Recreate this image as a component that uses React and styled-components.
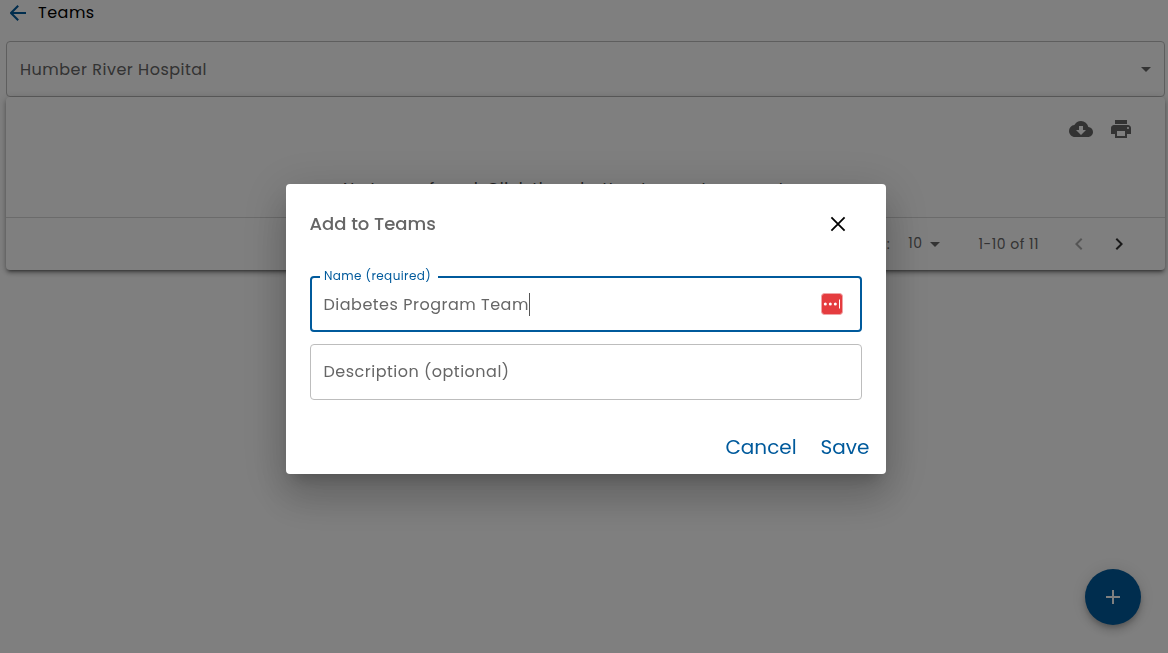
import React from "react";
import styled, { createGlobalStyle } from "styled-components";
import { MdCloudDownload, MdPrint, MdArrowDropDown, MdChevronLeft, MdChevronRight } from "react-icons/md";

const BLUE = "#005a9c";

const Global = createGlobalStyle`
  * { box-sizing: border-box; }
  body {
    margin: 0;
    background: #fff;
    overflow: hidden;
    font-family: Poppins, Inter, "Liberation Sans", sans-serif;
    font-size: 16px;
    color: #666;
  }
  button { font: inherit; border: 0; background: none; padding: 0; }
  svg { display: block; }
`;

const Text = styled.span`
  white-space: nowrap;
  font-size: ${(p) => p.$size || 16}px;
  letter-spacing: ${(p) => p.$track ?? 0.5}px;
  font-weight: ${(p) => p.$weight || 400};
  color: ${(p) => p.$color || "inherit"};
`;

const Page = styled.main`
  height: 653px;
  padding: 0 3px 0 6px;
`;

const Header = styled.header`
  display: flex;
  align-items: center;
  gap: 12px;
  height: 25px;
  padding-left: 4px;
  margin-bottom: 16px;
`;

const Select = styled.div`
  display: flex;
  align-items: center;
  justify-content: space-between;
  height: 56px;
  padding: 0 6px 0 13px;
  border: 1px solid #bdbdbd;
  border-radius: 4px;
`;

const Paper = styled.section`
  height: 173px;
  border-radius: 4px;
  background: #fff;
  box-shadow: 0 3px 3px -2px rgba(0, 0, 0, 0.4), 0 3px 4px rgba(0, 0, 0, 0.24), 0 1px 8px rgba(0, 0, 0, 0.2);
`;

const Toolbar = styled.div`
  display: flex;
  justify-content: flex-end;
  gap: 16px;
  height: 64px;
  padding: 20px 32px 0 0;
  color: #666;
`;

const Empty = styled.div`
  height: 57px;
  padding: 15px 0 0 337px;
  border-bottom: 1px solid #d6d6d6;
  color: #444;
`;

const Pagination = styled.footer`
  display: flex;
  align-items: center;
  justify-content: flex-end;
  height: 52px;
  padding-right: 34px;
`;

const PageSize = styled.div`
  display: flex;
  align-items: center;
  margin: 0 32px 0 18px;
`;

const PageCount = styled.div`
  padding-bottom: 3px;
`;

const Chevrons = styled.div`
  display: flex;
  gap: 16px;
  margin-left: 28px;
`;

const Fab = styled.button`
  position: fixed;
  right: 27px;
  bottom: 28px;
  display: grid;
  place-items: center;
  width: 56px;
  height: 56px;
  border-radius: 50%;
  background: ${BLUE};
  box-shadow: 0 3px 5px -1px rgba(0, 0, 0, 0.2), 0 6px 10px rgba(0, 0, 0, 0.14), 0 1px 18px rgba(0, 0, 0, 0.12);
`;

const Backdrop = styled.div`
  position: fixed;
  inset: 0;
  padding: 184px 0 0 286px;
  background: rgba(0, 0, 0, 0.5);
`;

const Dialog = styled.section`
  width: 600px;
  height: 290px;
  padding: 0 24px;
  border-radius: 4px;
  background: #fff;
  box-shadow: 0 11px 15px -7px rgba(0, 0, 0, 0.2), 0 24px 38px 3px rgba(0, 0, 0, 0.14), 0 9px 46px 8px rgba(0, 0, 0, 0.12);
`;

const DialogHeader = styled.div`
  display: flex;
  align-items: center;
  justify-content: space-between;
  height: 80px;
  padding-right: 16px;
`;

const DialogTitle = styled.h2`
  margin: 0 0 0 -0.5px;
  font-size: 18px;
  font-weight: 500;
  line-height: 26px;
`;

const Field = styled.fieldset`
  min-width: 0;
  height: ${(p) => (p.$active ? 62 : 56)}px;
  margin: ${(p) => (p.$active ? "6px 0 12px" : "0")};
  padding: ${(p) => (p.$active ? "0 17px 0 11.5px" : "0 12.5px")};
  border: ${(p) => (p.$active ? `2px solid ${BLUE}` : "1px solid #bdbdbd")};
  border-radius: 4px;
`;

const Legend = styled.legend`
  width: 118px;
  height: 14px;
  margin-left: -3.5px;
  padding: 0 7px 0 4px;
  line-height: 10px;
`;

const FieldRow = styled.div`
  display: flex;
  align-items: center;
  justify-content: space-between;
  height: ${(p) => (p.$active ? 40 : 52)}px;
`;

const Value = styled.div`
  display: flex;
  align-items: center;
`;

const Caret = styled.span`
  width: 1px;
  height: 23px;
  background: #555;
`;

const Actions = styled.div`
  display: flex;
  justify-content: flex-end;
  align-items: center;
  gap: 24px;
  height: 59px;
  margin: 17px -7.5px 0 0;
`;

function PasswordBadge() {
  return (
    <svg width="22" height="22" viewBox="0 0 22 22">
      <rect x=".5" y=".5" width="21" height="21" rx="3" fill="#e53c3f" stroke="#f0a5a7" />
      <g fill="#fff">
        <circle cx="4.3" cy="11" r="1.5" />
        <circle cx="9.3" cy="11" r="1.5" />
        <circle cx="14.3" cy="11" r="1.5" />
        <rect x="18" y="6.5" width="1" height="9" />
      </g>
    </svg>
  );
}

export default function App() {
  return (
    <>
      <Global />
      <Page>
        <Header>
          <svg width="16" height="16" viewBox="0 0 16 16" fill="none" stroke={BLUE} strokeWidth="2">
            <path d="M16 8H1.5M8.2.7L1 8l7.2 7.3" />
          </svg>
          <Text $color="#000">Teams</Text>
        </Header>
        <Select>
          <Text>Humber River Hospital</Text>
          <MdArrowDropDown size={24} />
        </Select>
        <Paper>
          <Toolbar>
            <MdCloudDownload size={24} />
            <MdPrint size={24} />
          </Toolbar>
          <Empty>
            <Text>
              No teams found. Click the <Text $size={12} $track={2.6}>+</Text> button to create a new team.
            </Text>
          </Empty>
          <Pagination>
            <Text $size={14}>Rows per page:</Text>
            <PageSize>
              <PageCount><Text $size={14}>10</Text></PageCount>
              <MdArrowDropDown size={24} />
            </PageSize>
            <Text $size={14}>1-10 of 11</Text>
            <Chevrons>
              <MdChevronLeft size={24} color="#ababab" />
              <MdChevronRight size={24} color="#333" />
            </Chevrons>
          </Pagination>
        </Paper>
        <Fab aria-label="Add">
          <svg width="14" height="14" viewBox="0 0 14 14" stroke="#fff" strokeWidth="2">
            <path d="M7 0v14M0 7h14" />
          </svg>
        </Fab>
      </Page>
      <Backdrop>
        <Dialog role="dialog" aria-label="Add to Teams">
          <DialogHeader>
            <DialogTitle>Add to Teams</DialogTitle>
            <button aria-label="Close">
              <svg width="16" height="16" viewBox="0 0 16 16" stroke="#000" strokeWidth="1.8">
                <path d="M1.4 1.4l13.2 13.2M14.6 1.4L1.4 14.6" />
              </svg>
            </button>
          </DialogHeader>
          <Field $active>
            <Legend><Text $size={12} $color={BLUE} $track={0.4}>Name (required)</Text></Legend>
            <FieldRow $active>
              <Value><Text>Diabetes Program Team</Text><Caret /></Value>
              <PasswordBadge />
            </FieldRow>
          </Field>
          <Field>
            <FieldRow><Text>Description (optional)</Text></FieldRow>
          </Field>
          <Actions>
            <button><Text $size={20} $track={0} $color={BLUE}>Cancel</Text></button>
            <button><Text $size={20} $track={0} $color={BLUE}>Save</Text></button>
          </Actions>
        </Dialog>
      </Backdrop>
    </>
  );
}
